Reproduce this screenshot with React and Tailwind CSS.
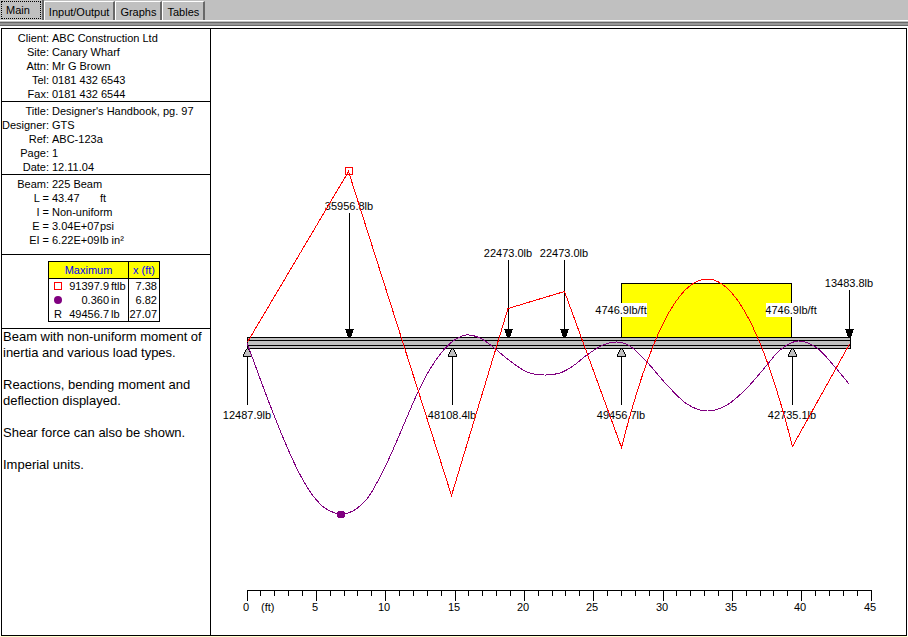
import React, { useState } from "react";
import clsx from "clsx";

const TABS = ["Main", "Input/Output", "Graphs", "Tables"];

const CLIENT = [
  ["Client:", "ABC Construction Ltd"],
  ["Site:", "Canary Wharf"],
  ["Attn:", "Mr G Brown"],
  ["Tel:", "0181 432 6543"],
  ["Fax:", "0181 432 6544"],
];

const JOB = [
  ["Title:", "Designer's Handbook, pg. 97"],
  ["Designer:", "GTS"],
  ["Ref:", "ABC-123a"],
  ["Page:", "1"],
  ["Date:", "12.11.04"],
];

const BEAM = [
  ["Beam:", "225 Beam"],
  ["L =", "43.47", "ft"],
  ["I =", "Non-uniform"],
  ["E =", "3.04E+07", "psi"],
  ["EI =", "6.22E+09", "lb in²"],
];

const NOTES = [
  "Beam with non-uniform moment of inertia and various load types.",
  "Reactions, bending moment and deflection displayed.",
  "Shear force can also be shown.",
  "Imperial units.",
];

const MAXIMA = [
  { marker: "moment", value: "91397.9", unit: "ftlb", x: "7.38" },
  { marker: "deflection", value: "0.360", unit: "in", x: "6.82" },
  { marker: "reaction", value: "49456.7", unit: "lb", x: "27.07" },
];

// chart geometry, in drawing units
const ORIGIN = 36;
const FOOT = 624 / 45;
const BEAM_TOP = 308;
const BEAM_BOTTOM = 319;
const AXIS_Y = 561;

const toX = (ft) => ORIGIN + Math.floor(ft * FOOT);

const POINT_LOADS = [
  { x: 138, top: 184, label: "35956.8lb" },
  { x: 297, top: 231, label: "22473.0lb" },
  { x: 353, top: 231, label: "22473.0lb" },
  { x: 638, top: 261, label: "13483.8lb" },
];

const REACTIONS = [
  { x: 36, label: "12487.9lb" },
  { x: 241, label: "48108.4lb" },
  { x: 410, label: "49456.7lb" },
  { x: 581, label: "42735.1lb" },
];

const DEFLECTION = [
  [36, 314], [59, 376], [80, 427], [96, 458], [109, 475], [119, 482],
  [130, 485], [142, 482], [156, 470], [169, 448], [181, 423], [196, 388],
  [207, 363], [219, 340], [231, 323], [242, 312], [255, 306], [269, 309],
  [282, 318], [299, 332], [316, 343], [333, 346], [349, 344], [362, 337],
  [376, 326], [392, 316], [406, 313], [419, 317], [436, 333], [456, 356],
  [476, 375], [496, 382], [516, 376], [536, 359], [556, 336], [569, 321],
  [587, 312], [606, 319], [624, 338], [638, 355],
];

// Catmull-Rom spline through all the points
const smoothPath = (points) =>
  points.reduce((d, p, i) => {
    if (i === 0) return `M${p[0]} ${p[1]}`;
    const p0 = points[i - 2] || points[i - 1];
    const p1 = points[i - 1];
    const p3 = points[i + 1] || p;
    const c1 = [p1[0] + (p[0] - p0[0]) / 6, p1[1] + (p[1] - p0[1]) / 6];
    const c2 = [p[0] - (p3[0] - p1[0]) / 6, p[1] - (p3[1] - p1[1]) / 6];
    return `${d} C${c1[0]} ${c1[1]} ${c2[0]} ${c2[1]} ${p[0]} ${p[1]}`;
  }, "");

const TabBar = ({ active, onSelect }) => (
  <div role="tablist" className="flex h-5 items-stretch bg-[#c0c0c0] leading-4">
    {TABS.map((tab) => (
      <button
        key={tab}
        type="button"
        role="tab"
        aria-selected={tab === active}
        onClick={() => onSelect(tab)}
        className={clsx(
          "border-r-2 border-r-[#686868]",
          tab === active
            ? "p-px"
            : "mt-px border-t border-l border-t-white border-l-white px-1 pt-0.5"
        )}
      >
        {tab === active ? (
          <span className="block h-full border border-dotted border-black pr-2.5 pl-1">
            {tab}
          </span>
        ) : (
          tab
        )}
      </button>
    ))}
  </div>
);

const InfoList = ({ rows, className }) => (
  <dl className={clsx("border-b border-black pt-0.5 leading-[14px]", className)}>
    {rows.map(([label, value, unit]) => (
      <div key={label} className="flex gap-[3px] whitespace-nowrap">
        <dt className="w-[47px] shrink-0 text-right">{label}</dt>
        <dd className="flex">
          <span className={unit && "w-12"}>{value}</span>
          {unit && <span>{unit}</span>}
        </dd>
      </div>
    ))}
  </dl>
);

const Marker = ({ type }) => {
  if (type === "moment")
    return <span className="block size-2 border border-[#ff0000]" />;
  if (type === "deflection")
    return <span className="block size-2 rounded-full bg-[#800080]" />;
  return "R";
};

const MaximumTable = () => (
  <div className="border-b border-black py-1.5 pl-[46px]">
    <table className="w-28 table-fixed border-separate border-spacing-0 border border-black leading-[14px]">
      <colgroup>
        <col className="w-4" />
        <col className="w-11" />
        <col />
        <col className="w-[31px]" />
      </colgroup>
      <thead className="bg-[#ffff00] leading-4 text-[#0000ff]">
        <tr>
          <th colSpan={3} className="border-b border-black font-normal">
            Maximum
          </th>
          <th className="border-b border-l border-black font-normal whitespace-nowrap">
            x (ft)
          </th>
        </tr>
      </thead>
      <tbody>
        {MAXIMA.map((row) => (
          <tr key={row.marker}>
            <td className="pl-[5px]">
              <Marker type={row.marker} />
            </td>
            <td className="text-right">{row.value}</td>
            <td className="pl-0.5 whitespace-nowrap">{row.unit}</td>
            <td className="border-l border-black pr-0.5 text-right">{row.x}</td>
          </tr>
        ))}
      </tbody>
    </table>
  </div>
);

const PointLoad = ({ x, top, label }) => (
  <g>
    <path d={`M${x + 0.5} ${top}V${BEAM_TOP}`} stroke="black" />
    <path d={`M${x - 4} 300h9l-3 8h-3z`} fill="black" />
    <text x={x} y={top - 3} textAnchor="middle">
      {label}
    </text>
  </g>
);

const Reaction = ({ x, label }) => (
  <g>
    <path d={`M${x + 0.5} 328V376`} stroke="black" />
    <path
      d={`M${x + 0.5} 319.5l2 2l2 5v1h-8v-1l2 -5z`}
      fill="#c0c0c0"
      stroke="black"
    />
    <text x={x} y="390" textAnchor="middle">
      {label}
    </text>
  </g>
);

const UniformLoad = () => (
  <g>
    <rect x="410.5" y="254.5" width="170" height="54" fill="#ffff00" stroke="black" />
    <rect x="384" y="274" width="52" height="14" fill="white" />
    <rect x="555" y="274" width="52" height="14" fill="white" />
    <text x="410" y="285" textAnchor="middle">
      4746.9lb/ft
    </text>
    <text x="580" y="285" textAnchor="middle">
      4746.9lb/ft
    </text>
  </g>
);

const Scale = () => (
  <g>
    <path d={`M${toX(0)} ${AXIS_Y + 0.5}H${toX(45) + 1}`} stroke="black" />
    {Array.from({ length: 46 }, (_, ft) => (
      <g key={ft}>
        <path
          d={`M${toX(ft) + 0.5} ${AXIS_Y}v${ft % 5 === 0 ? 11 : 6}`}
          stroke="black"
        />
        {ft % 5 === 0 && (
          <text x={toX(ft) - 1} y="582" textAnchor="middle">
            {ft}
          </text>
        )}
      </g>
    ))}
    <text x="50" y="582">
      (ft)
    </text>
  </g>
);

const BeamDiagram = () => (
  <svg
    viewBox="0 0 695 606"
    className="block h-auto w-full"
    fontSize="11"
    fill="black"
    shapeRendering="crispEdges"
    role="img"
    aria-label="Beam diagram"
  >
    <UniformLoad />
    <rect
      x="36.5"
      y={BEAM_TOP + 0.5}
      width="603"
      height={BEAM_BOTTOM - BEAM_TOP}
      fill="#c0c0c0"
      stroke="black"
    />
    <path d="M36 311.5H640M36 316.5H640" stroke="black" />
    {POINT_LOADS.map((load) => (
      <PointLoad key={load.x} {...load} />
    ))}
    {REACTIONS.map((reaction) => (
      <Reaction key={reaction.x} {...reaction} />
    ))}

    {/* deflection */}
    <path d={smoothPath(DEFLECTION)} fill="none" stroke="#800080" />
    <circle cx="130" cy="485.5" r="4" fill="#800080" />

    {/* bending moment */}
    <path
      d="M36.5 313L137.5 142.5L240.5 466.5L297 279.5L353.5 262.5L410.5 418.5Q496 82 581.5 417.5L638.5 315"
      fill="none"
      stroke="#ff0000"
    />
    <rect x="134.5" y="138.5" width="7" height="7" fill="none" stroke="#ff0000" />
    <Scale />
  </svg>
);

export default function App() {
  const [active, setActive] = useState(TABS[0]);

  return (
    <div className="flex min-h-screen flex-col bg-white font-['Liberation_Sans',Arial,sans-serif] text-[11px] text-black">
      <TabBar active={active} onSelect={setActive} />
      <div className="h-1.5 border-t border-b border-t-white border-b-[#686868] bg-[#c0c0c0] pt-px">
        <div className="h-full border-t border-[#686868] bg-[#989898]" />
      </div>
      <div className="flex grow border-b border-[#ffffcc] px-px pt-0.5">
        <main className="flex grow border border-black">
          <aside className="w-[209px] shrink-0 border-r border-black">
            <InfoList rows={CLIENT} />
            <InfoList rows={JOB} />
            <InfoList rows={BEAM} className="pb-[7px]" />
            <MaximumTable />
            <div className="flex flex-col gap-4 pl-px text-[13px] leading-4">
              {NOTES.map((note) => (
                <p key={note}>{note}</p>
              ))}
            </div>
          </aside>
          <section className="min-w-0 grow">
            <BeamDiagram />
          </section>
        </main>
      </div>
    </div>
  );
}
